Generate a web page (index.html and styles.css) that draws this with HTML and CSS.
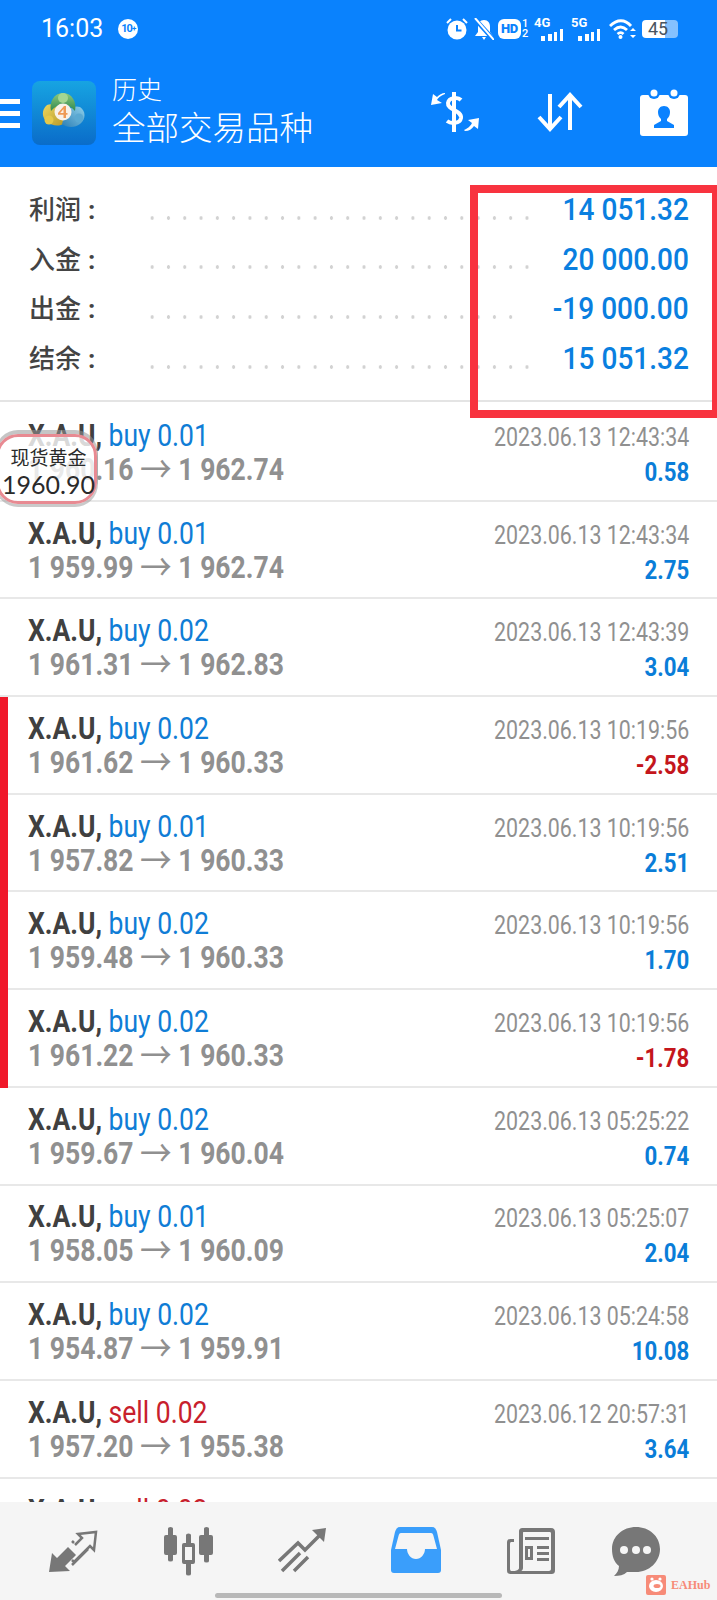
FILE: index.html
```html
<!DOCTYPE html>
<html lang="zh">
<head>
<meta charset="utf-8">
<title>历史</title>
<link rel="stylesheet" href="styles.css">
</head>
<body>
<div class="screen">
  <header class="top">
    <div class="status">
      <div class="status-left">
        <span class="clock">16:03</span>
        <span class="badge">10<small>+</small></span>
      </div>
      <div class="status-right">
        <svg class="alarm" width="22" height="22" viewBox="0 0 22 22"><circle cx="11" cy="12" r="9.500" fill="#fff"/><path d="M11 7v5.500h4.500" fill="none" stroke="#0a82ff" stroke-width="2"/><path d="M1 5l4-4M21 5l-4-4" stroke="#fff" stroke-width="2"/></svg>
        <svg class="bell" width="20" height="22" viewBox="0 0 20 22"><path d="M10 2c4 0 6 3 6 7v5l3 4H1l3-4V9c0-4 2-7 6-7zM8 19h4l-2 3z" fill="#fff"/><path d="M0 0l19 21" stroke="#0a82ff" stroke-width="4.500"/><path d="M1 0l19 22" stroke="#fff" stroke-width="2"/></svg>
        <span class="hd"><b>HD</b><i>1<br>2</i></span>
        <span class="net"><em>4G</em><svg width="24" height="12" viewBox="0 0 24 12"><path d="M1 7h4v5H1zM8 5h4v7H8zM14 3h3v9h-3zM20 0h3v12h-3z" fill="#fff"/></svg></span>
        <span class="net"><em>5G</em><svg width="24" height="12" viewBox="0 0 24 12"><path d="M1 7h4v5H1zM8 5h4v7H8zM14 3h3v9h-3zM20 0h3v12h-3z" fill="#fff"/></svg></span>
        <svg class="wifi" width="27" height="20" viewBox="0 0 27 20"><path d="M1 7c7-7 15-7 21 0M5 11c4.500-4 9-4 13 0M8.500 15c2.500-2 4-2 6 0" fill="none" stroke="#fff" stroke-width="2.800"/><circle cx="11.500" cy="18" r="2" fill="#fff"/><path d="M24 9l3 3h-6zM24 19l3-3h-6z" fill="#fff"/></svg>
        <span class="battery">45</span>
      </div>
    </div>
    <div class="bar">
      <div class="burger"><span></span><span></span><span></span></div>
      <svg class="logo" width="64" height="64" viewBox="0 0 64 64">
        <defs>
          <linearGradient id="lg" x1="0" y1="0" x2="0" y2="1"><stop offset="0" stop-color="#17a4e2"/><stop offset="1" stop-color="#0a6cc9"/></linearGradient>
          <linearGradient id="lgreen" x1="0" y1="0" x2="0" y2="1"><stop offset="0" stop-color="#8cc97c"/><stop offset="1" stop-color="#2f8a52"/></linearGradient>
          <linearGradient id="lyel" x1="0" y1="0" x2="1" y2="1"><stop offset="0" stop-color="#ecd75f"/><stop offset="1" stop-color="#b89a2a"/></linearGradient>
          <linearGradient id="lblue" x1="1" y1="0" x2="0" y2="1"><stop offset="0" stop-color="#8fd0ea"/><stop offset="1" stop-color="#2b7fb6"/></linearGradient>
        </defs>
        <rect width="64" height="64" rx="8" fill="url(#lg)"/>
        <path d="M15 24c5-2 10 0 14 6l3 12c-4 4-12 3-17-1-5-4-6-12 0-17z" fill="url(#lyel)"/>
        <circle cx="17" cy="39" r="4.500" fill="#e4c84a"/>
        <path d="M48 26c-5-2-11 1-15 7l-3 10c5 4 13 4 18 0 6-5 6-13 0-17z" fill="url(#lblue)"/>
        <circle cx="47" cy="37" r="4.500" fill="#5aa9d2"/>
        <path d="M19 30c-2-9 3-18 12-18s14 9 12 18c-3-4-7-6-12-6s-9 2-12 6z" fill="url(#lgreen)"/>
        <circle cx="31" cy="17" r="5" fill="#a4d692"/>
        <circle cx="31" cy="31" r="8.500" fill="#f8f1e8"/>
        <path d="M32 25h2v7h1.500v1.800H34V37h-2.500v-3.200H26v-1.800zM31.500 28l-3.300 4h3.300z" fill="#ee9a55"/>
      </svg>
      <div class="titles">
        <div class="t1">历史</div>
        <div class="t2">全部交易品种</div>
      </div>
      <div class="actions">
        <svg width="50" height="42" viewBox="0 0 50 42"><path d="M24 1v40" stroke="#fff" stroke-width="4"/><path d="M31 9c-3-3-12-3-13 3-1 7 14 7 13 15-1 6-10 6-14 3" fill="none" stroke="#fff" stroke-width="4"/><path d="M15 3C10 5 8 7 7 9l5 3-11 2 2-11 4 3c2-2 5-4 8-4z" fill="#fff"/><path d="M34 39c5-2 7-5 8-7l-4-3 11-2-1 11-4-3c-2 3-5 5-9 5z" fill="#fff"/></svg>
        <svg width="46" height="40" viewBox="0 0 46 40"><path d="M13 2v34M2 25l11 12 11-12M33 38V4M22 15L33 3l11 12" fill="none" stroke="#fff" stroke-width="4"/></svg>
        <svg width="48" height="48" viewBox="0 0 48 48"><path d="M3 7h42a3 3 0 0 1 3 3v35a3 3 0 0 1-3 3H3a3 3 0 0 1-3-3V10a3 3 0 0 1 3-3z" fill="#fff"/><circle cx="14" cy="5" r="6" fill="#0a82ff"/><circle cx="34" cy="5" r="6" fill="#0a82ff"/><circle cx="14" cy="5" r="3.500" fill="#fff"/><circle cx="34" cy="5" r="3.500" fill="#fff"/><path d="M24 18c4 0 6 3 6 6 0 3-1 5-3 7v2l7 4v3H14v-3l7-4v-2c-2-2-3-4-3-7 0-3 2-6 6-6z" fill="#0a82ff"/></svg>
      </div>
    </div>
  </header>

  <section class="summary">
    <div class="sum-row"><span class="label">利润<i>:</i></span><span class="dots"></span><span class="value"><span class="cond-r">14 051.32</span></span></div>
    <div class="sum-row"><span class="label">入金<i>:</i></span><span class="dots"></span><span class="value"><span class="cond-r">20 000.00</span></span></div>
    <div class="sum-row"><span class="label">出金<i>:</i></span><span class="dots short"></span><span class="value"><span class="cond-r">-19 000.00</span></span></div>
    <div class="sum-row"><span class="label">结余<i>:</i></span><span class="dots"></span><span class="value"><span class="cond-r">15 051.32</span></span></div>
  </section>

  <main class="list">
    <article class="row"><div class="left"><div class="l1 cond"><b>X.A.U,</b> <span class="buy">buy 0.01</span></div><div class="l2 cond">1 960.16 <span class="arrow">→</span> 1 962.74</div></div><div class="right"><div class="date cond-r">2023.06.13 12:43:34</div><div class="pnl cond-r">0.58</div></div></article>
    <article class="row"><div class="left"><div class="l1 cond"><b>X.A.U,</b> <span class="buy">buy 0.01</span></div><div class="l2 cond">1 959.99 <span class="arrow">→</span> 1 962.74</div></div><div class="right"><div class="date cond-r">2023.06.13 12:43:34</div><div class="pnl cond-r">2.75</div></div></article>
    <article class="row"><div class="left"><div class="l1 cond"><b>X.A.U,</b> <span class="buy">buy 0.02</span></div><div class="l2 cond">1 961.31 <span class="arrow">→</span> 1 962.83</div></div><div class="right"><div class="date cond-r">2023.06.13 12:43:39</div><div class="pnl cond-r">3.04</div></div></article>
    <article class="row marked"><div class="left"><div class="l1 cond"><b>X.A.U,</b> <span class="buy">buy 0.02</span></div><div class="l2 cond">1 961.62 <span class="arrow">→</span> 1 960.33</div></div><div class="right"><div class="date cond-r">2023.06.13 10:19:56</div><div class="pnl neg cond-r">-2.58</div></div></article>
    <article class="row marked"><div class="left"><div class="l1 cond"><b>X.A.U,</b> <span class="buy">buy 0.01</span></div><div class="l2 cond">1 957.82 <span class="arrow">→</span> 1 960.33</div></div><div class="right"><div class="date cond-r">2023.06.13 10:19:56</div><div class="pnl cond-r">2.51</div></div></article>
    <article class="row marked"><div class="left"><div class="l1 cond"><b>X.A.U,</b> <span class="buy">buy 0.02</span></div><div class="l2 cond">1 959.48 <span class="arrow">→</span> 1 960.33</div></div><div class="right"><div class="date cond-r">2023.06.13 10:19:56</div><div class="pnl cond-r">1.70</div></div></article>
    <article class="row marked"><div class="left"><div class="l1 cond"><b>X.A.U,</b> <span class="buy">buy 0.02</span></div><div class="l2 cond">1 961.22 <span class="arrow">→</span> 1 960.33</div></div><div class="right"><div class="date cond-r">2023.06.13 10:19:56</div><div class="pnl neg cond-r">-1.78</div></div></article>
    <article class="row"><div class="left"><div class="l1 cond"><b>X.A.U,</b> <span class="buy">buy 0.02</span></div><div class="l2 cond">1 959.67 <span class="arrow">→</span> 1 960.04</div></div><div class="right"><div class="date cond-r">2023.06.13 05:25:22</div><div class="pnl cond-r">0.74</div></div></article>
    <article class="row"><div class="left"><div class="l1 cond"><b>X.A.U,</b> <span class="buy">buy 0.01</span></div><div class="l2 cond">1 958.05 <span class="arrow">→</span> 1 960.09</div></div><div class="right"><div class="date cond-r">2023.06.13 05:25:07</div><div class="pnl cond-r">2.04</div></div></article>
    <article class="row"><div class="left"><div class="l1 cond"><b>X.A.U,</b> <span class="buy">buy 0.02</span></div><div class="l2 cond">1 954.87 <span class="arrow">→</span> 1 959.91</div></div><div class="right"><div class="date cond-r">2023.06.13 05:24:58</div><div class="pnl cond-r">10.08</div></div></article>
    <article class="row"><div class="left"><div class="l1 cond"><b>X.A.U,</b> <span class="sell">sell 0.02</span></div><div class="l2 cond">1 957.20 <span class="arrow">→</span> 1 955.38</div></div><div class="right"><div class="date cond-r">2023.06.12 20:57:31</div><div class="pnl cond-r">3.64</div></div></article>
    <article class="row partial"><div class="left"><div class="l1 cond"><b>X.A.U,</b> <span class="sell">sell 0.02</span></div></div></article>
  </main>

  <nav class="tabs">
    <svg width="50" height="46" viewBox="0 0 50 46"><path d="M1 45l3-19 5 5 11-11 8 8-11 11 5 5z" fill="#777"/><path d="M24 14l2 2M27 18l7-7-4-4 18-2-2 18-4-4-16 16-2-2" fill="none" stroke="#777" stroke-width="2.500"/><path d="M24 38l16-16" stroke="#777" stroke-width="2.500"/></svg>
    <svg width="50" height="50" viewBox="0 0 50 50"><path d="M5 1.500a2.500 1.500 0 0 1 5 0V8h2a2 2 0 0 1 2 2v16a2 2 0 0 1-2 2h-2v5a2.500 1.500 0 0 1-5 0v-5H3a2 2 0 0 1-2-2V10a2 2 0 0 1 2-2h2zM41 1.500a2.500 1.500 0 0 1 5 0V8h2a2 2 0 0 1 2 2v16a2 2 0 0 1-2 2h-2v6a2.500 1.500 0 0 1-5 0v-6h-3a2 2 0 0 1-2-2V10a2 2 0 0 1 2-2h3z" fill="#777"/><path d="M23 8a2.500 1.500 0 0 1 5 0v8h2a2 2 0 0 1 2 2v17a2 2 0 0 1-2 2h-2v10a2.500 1.500 0 0 1-5 0V37h-2a2 2 0 0 1-2-2V18a2 2 0 0 1 2-2h2z" fill="#777"/><rect x="22" y="20" width="7" height="13" fill="#f5f5f5"/></svg>
    <svg width="48" height="46" viewBox="0 0 48 46"><path d="M1 34L20 16l7 7 17-17" fill="none" stroke="#777" stroke-width="3.500"/><path d="M34 3l14-2-2 14z" fill="#777"/><path d="M4 44l18-18M16 44l14-14" stroke="#777" stroke-width="3.500"/></svg>
    <svg width="50" height="46" viewBox="0 0 50 46"><path d="M9 0h32c3 0 4 2 5 5l4 18v20c0 2-1 3-3 3H3c-2 0-3-1-3-3V23L4 5c1-3 2-5 5-5z" fill="#3a9efb"/><path d="M10 6h30c1.500 0 2 1 2.500 3L46 22H34c0 5-4 10-9 10s-9-5-9-10H4L7.500 9C8 7 8.500 6 10 6z" fill="#f5f5f5"/></svg>
    <svg width="50" height="48" viewBox="0 0 50 48"><path d="M17 1h28c3 0 4 2 4 4v38c0 3-1 4-4 4H5c-3 0-4-1-4-4V16c0-3 1-4 4-4h3v3H6c-1 0-2 0-2 2v24c0 3 1 3 2 3h2c2 0 5-1 5-3V5c0-3 1-4 4-4zm1 4c-1 0-1 0-1 1v35c0 1-1 3-2 3h28c1 0 2-1 2-2V6c0-1-1-1-2-1z" fill="#777"/><path d="M19 10h24v3H19zM19 19h8v14h-8zM31 19h12v3H31zM31 25h12v3H31zM31 31h12v3H31z" fill="#777"/><rect x="22" y="22" width="2" height="8" fill="#f5f5f5"/></svg>
    <svg class="chat" width="50" height="50" viewBox="0 0 50 50"><path d="M25 0c13 0 24 9 24 22s-11 23-24 23c-3 0-6 0-9 0-3 3-8 4-13 4 3-3 5-6 5-10C3 35 1 29 1 22 1 9 12 0 25 0z" fill="#777"/><circle cx="13" cy="23" r="4" fill="#f5f5f5"/><circle cx="25" cy="23" r="4" fill="#f5f5f5"/><circle cx="36" cy="23" r="4" fill="#f5f5f5"/></svg>
  </nav>

  <div class="home"></div>
  <div class="mark-box"></div>
  <div class="float"><div class="f1">现货黄金</div><div class="f2">1960.90</div></div>
  <div class="wm">
    <svg width="20" height="20" viewBox="0 0 20 20"><rect width="20" height="20" rx="2" fill="#f78b78"/><ellipse cx="10" cy="11" rx="7" ry="6" fill="#fff"/><circle cx="6" cy="4" r="1.600" fill="#fff"/><circle cx="14" cy="4" r="1.600" fill="#fff"/><ellipse cx="11" cy="11" rx="3.500" ry="2" fill="#f78b78"/></svg>
    <span>EAHub</span>
  </div>
</div>
</body>
</html>
```

FILE: styles.css
```css
* { box-sizing: border-box; }
html, body { margin: 0; padding: 0; background: #fff; }
.screen {
  position: relative;
  width: 717px;
  height: 1600px;
  overflow: hidden;
  display: flex;
  flex-direction: column;
  font-family: Roboto, "Noto Sans CJK SC", sans-serif;
}

/* header */
.top { background: #0a82fd; color: #fff; height: 167px; flex: none; }
.status { height: 57px; display: flex; justify-content: space-between; align-items: center; padding: 0 39px 0 41px; }
.status-left { display: flex; align-items: center; gap: 15px; }
.clock { font-size: 25px; }
.badge { width: 20px; height: 20px; border-radius: 50%; background: #fff; color: #0a82fd; font-size: 11px; font-weight: 700; display: flex; align-items: center; justify-content: center; letter-spacing: -1px; }
.badge small { font-size: 8px; }
.status-right { display: flex; align-items: center; }
.alarm { margin-right: 6px; }
.bell { margin-right: 4px; }
.hd { display: flex; align-items: center; gap: 1px; width: 29px; margin-right: 7px; }
.hd b { background: #fff; color: #0a82fd; font-size: 13px; font-weight: 900; height: 20px; width: 23px; flex: none; border-radius: 6px; display: flex; align-items: center; justify-content: center; letter-spacing: -0.3px; }
.hd i { font-style: normal; font-size: 11px; line-height: 10px; font-weight: 500; }
.net { display: flex; flex-direction: column; width: 30px; height: 24px; margin-right: 7px; }
.net em { font-style: normal; font-size: 13px; font-weight: 700; line-height: 11px; }
.net svg { margin-left: 6px; margin-top: 1px; }
.wifi { margin-left: 1px; margin-right: 6px; }
.battery { width: 36px; height: 18px; border-radius: 4px; background: linear-gradient(90deg, #fff 0 64%, rgba(255,255,255,.5) 64% 100%); color: #4a5560; font-size: 18px; line-height: 18px; padding-left: 6px; white-space: nowrap; }
.bar { height: 110px; display: flex; align-items: center; }
.burger { width: 20px; display: flex; flex-direction: column; gap: 7px; margin-right: 12px; margin-top: 2px; }
.burger span { display: block; height: 5px; background: #fff; }
.logo { flex: none; margin-top: 2px; }
.titles { margin-left: 16px; display: flex; flex-direction: column; margin-top: 2px; }
.t1 { font-size: 25px; line-height: 32px; font-weight: 300; }
.t2 { font-size: 33.500px; line-height: 44px; font-weight: 300; }
.actions { margin-left: auto; display: flex; align-items: center; gap: 57px; padding-right: 29px; }

/* summary */
.summary { height: 235px; flex: none; padding-top: 18px; border-bottom: 2px solid #e4e4e4; }
.sum-row { height: 49.600px; display: flex; align-items: center; padding: 0 28px 0 29px; }
.label { font-size: 26px; font-weight: 500; color: #444; width: 122px; flex: none; white-space: nowrap; margin-bottom: 4px; margin-right: -7px; }
.label i { font-style: normal; font-weight: 700; margin-left: 7px; }
.dots { width: 394px; height: 4px; margin-top: 16px; background: radial-gradient(circle, #d2d2d2 1.500px, transparent 2px) 0 0 / 16.300px 4px repeat-x; flex: none; }
.dots.short { width: 378px; }
.value { margin-left: auto; font-size: 31.500px; font-weight: 500; color: #0a7fe0; white-space: nowrap; }

/* condensed text */
.cond, .cond-r { display: block; white-space: nowrap; transform: scaleX(.855); }
.cond { transform-origin: left center; }
.cond-r { transform-origin: right center; }
.value .cond-r { display: inline-block; transform: scaleX(.89); }

/* rows */
.list { flex: 1; overflow: hidden; min-height: 0; }
.row { height: 97.700px; padding: 6px 28px 0 28px; display: flex; justify-content: space-between; align-items: center; border-bottom: 2px solid #e8e8e8; position: relative; }
.row:first-child { height: 99.700px; padding-top: 8px; }
.row.partial { align-items: flex-start; padding-top: 15px; }
.row.marked::before { content: ""; position: absolute; left: 0; top: 0; bottom: -2px; width: 8px; background: #f0182a; }
.left { margin-bottom: 4px; }
.l1, .l2 { line-height: 34px; font-size: 31px; }
.l1 b { color: #404040; font-weight: 700; }
.buy { color: #0f7dd6; }
.sell { color: #c8202c; }
.l2 { color: #909090; font-weight: 700; }
.arrow { font-family: "Noto Sans CJK SC", sans-serif; font-weight: 400; font-size: 37px; line-height: 0; vertical-align: -3px; }
.right { text-align: right; }
.date { line-height: 34px; font-size: 25px; color: #909090; }
.pnl { line-height: 34px; font-size: 26px; font-weight: 700; color: #0a7dd8; }
.pnl.neg { color: #c4161c; }

/* tabs */
.tabs { height: 98px; flex: none; background: #f5f5f5; display: flex; gap: 65px; padding: 25px 0 0 48px; align-items: flex-start; position: relative; }
.chat { margin-left: -10px; }

/* overlays */
.home { position: absolute; left: 215px; top: 1593px; width: 287px; height: 5px; border-radius: 3px; background: #b8b8b8; }
.mark-box { position: absolute; left: 470px; top: 185px; width: 247px; height: 233px; border: 8px solid #f8333f; border-right-width: 5px; }
.float { position: absolute; left: -4px; top: 434px; width: 101px; height: 70px; border: 3px solid #e88a92; border-radius: 22px; background: rgba(255,255,255,.8); box-shadow: 0 -3px 0 1px rgba(150,150,150,.55), 0 2px 0 1px rgba(150,150,150,.5); text-align: center; color: #2a2a2a; display: flex; flex-direction: column; align-items: center; padding-top: 10px; }
.f1 { font-size: 19px; line-height: 24px; margin-left: 4px; }
.f2 { font-family: Lato, sans-serif; font-weight: 400; font-size: 25px; line-height: 27px; margin-left: 4px; }
.wm { position: absolute; left: 646px; top: 1575px; display: flex; align-items: center; gap: 5px; }
.wm span { font-family: "Liberation Serif", serif; font-weight: 700; font-size: 12px; color: #f78b78; }
```
